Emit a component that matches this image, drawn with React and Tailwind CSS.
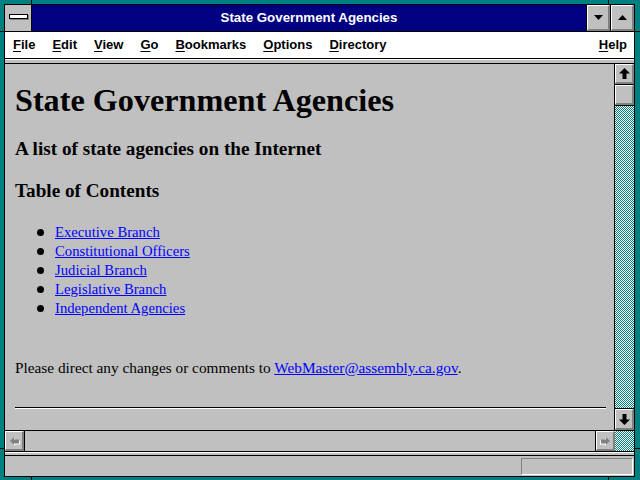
const links = [
  "Executive Branch",
  "Constitutional Officers",
  "Judicial Branch",
  "Legislative Branch",
  "Independent Agencies",
];

const menus = ["File", "Edit", "View", "Go", "Bookmarks", "Options", "Directory"];

const dither =
  "bg-[image:repeating-conic-gradient(#008080_0%_25%,#ffffff_0%_50%)] bg-[length:2px_2px]";

// raised win31 button look
const bevel =
  "bg-[#c0c0c0] border-t border-l border-t-white border-l-white border-r-2 border-b-2 border-r-[#808080] border-b-[#808080]";

const MenuLabel = ({ text }) => (
  <span>
    <span className="underline underline-offset-2">{text[0]}</span>
    {text.slice(1)}
  </span>
);

const VArrow = ({ down }) => (
  <svg width="11" height="11" viewBox="0 0 11 11" className={down ? "rotate-180" : ""}>
    <polygon points="5.5,0 11,5.5 7.5,5.5 7.5,11 3.5,11 3.5,5.5 0,5.5" fill="#000" />
  </svg>
);

const HArrow = ({ right }) => (
  <svg width="11" height="10" viewBox="0 0 11 10" className={right ? "-scale-x-100" : ""}>
    <polygon points="1,5 5,1 5,3.5 10,3.5 10,7.5 5,7.5 5,9" fill="#fff" transform="translate(1,1)" />
    <polygon points="1,5 5,1 5,3.5 10,3.5 10,7.5 5,7.5 5,9" fill="#808080" />
  </svg>
);

const Tri = ({ up }) => (
  <svg width="9" height="5" viewBox="0 0 9 5">
    <polygon points={up ? "4.5,0 9,5 0,5" : "0,0 9,0 4.5,5"} fill="#000" />
  </svg>
);

const App = () => {
  return (
    <div className="relative w-[640px] h-[480px] bg-[#008080] pt-[4px] pl-[4px] pr-[5px] pb-[3px]">
      {/* frame corner ticks */}
      <div className="absolute left-[31px] top-0 w-px h-[4px] bg-black" />
      <div className="absolute left-[608px] top-0 w-px h-[4px] bg-black" />
      <div className="absolute left-[31px] bottom-0 w-px h-[3px] bg-black" />
      <div className="absolute left-[608px] bottom-0 w-px h-[3px] bg-black" />
      <div className="absolute left-0 top-[31px] w-[4px] h-px bg-black" />
      <div className="absolute left-0 top-[448px] w-[4px] h-px bg-black" />
      <div className="absolute right-0 top-[31px] w-[5px] h-px bg-black" />
      <div className="absolute right-0 top-[448px] w-[5px] h-px bg-black" />

      <div className="w-full h-full border border-black flex flex-col bg-[#c0c0c0]">
        {/* title bar */}
        <div className="h-[27px] flex border-b border-black">
          <div className="w-[27px] border-r border-black bg-[#c0c0c0] flex items-center justify-center">
            <div className="w-[19px] h-[5px] -mt-[4px] border border-black bg-white shadow-[1px_1px_0_#808080]" />
          </div>
          <div className="flex-1 bg-[#000080] border-r border-black flex items-center justify-center text-white font-bold text-[13.3px] font-['Liberation_Sans',sans-serif]">
            State Government Agencies
          </div>
          <div className="w-[24px] border-r border-black">
            <div className={`${bevel} w-full h-full flex items-center justify-center`}>
              <Tri />
            </div>
          </div>
          <div className="w-[23px]">
            <div className={`${bevel} w-full h-full flex items-center justify-center`}>
              <Tri up />
            </div>
          </div>
        </div>

        {/* menu bar */}
        <div className="h-[27px] bg-white border-b border-black flex items-center pl-[8px] pr-[7px] gap-[17px] text-[13px] font-bold text-black font-['Liberation_Sans',sans-serif]">
          {menus.map((m) => (
            <MenuLabel key={m} text={m} />
          ))}
          <span className="ml-auto">
            <MenuLabel text="Help" />
          </span>
        </div>
        <div className="h-[5px] border-t border-white border-b border-b-black bg-[#c0c0c0]" />

        {/* page + vertical scroll */}
        <div className="h-[366px] flex">
          <div className="flex-1 min-w-0 overflow-hidden bg-[#c0c0c0] pl-[10px] pr-[8px] pt-[18px] text-black font-['Liberation_Serif',serif]">
            <h1 className="text-[32.2px] leading-[36px] font-bold whitespace-nowrap">State Government Agencies</h1>
            <h2 className="mt-[20px] text-[19.2px] leading-[22px] font-bold whitespace-nowrap">
              A list of state agencies on the Internet
            </h2>
            <h3 className="mt-[20px] text-[19.2px] leading-[22px] font-bold">Table of Contents</h3>
            <ul className="mt-[21px]">
              {links.map((l) => (
                <li key={l} className="h-[19px] flex items-center text-[14.7px] leading-[19px]">
                  <span className="ml-[22px] w-[7px] h-[7px] rounded-full bg-black" />
                  <a href="#" className="ml-[11px] text-[#0000ff] underline">
                    {l}
                  </a>
                </li>
              ))}
            </ul>
            <p className="mt-[40px] text-[15.3px] leading-[19px] whitespace-nowrap">
              Please direct any changes or comments to{" "}
              <a href="#" className="text-[#0000ff] underline">
                WebMaster@assembly.ca.gov
              </a>
              .
            </p>
            <div className="mt-[30px] h-[2px] border-t border-black border-b border-b-white" />
          </div>

          <div className="w-[20px] shrink-0 border-l border-black flex flex-col">
            <div className="h-[21px] border-b border-black">
              <div className={`${bevel} w-full h-full flex items-center justify-center`}>
                <VArrow />
              </div>
            </div>
            <div className="h-[21px] border-b border-black">
              <div className={`${bevel} w-full h-full`} />
            </div>
            <div className={`flex-1 ${dither}`} />
            <div className="h-[22px] border-t border-black">
              <div className={`${bevel} w-full h-full flex items-center justify-center`}>
                <VArrow down />
              </div>
            </div>
          </div>
        </div>

        {/* horizontal scroll */}
        <div className="h-[22px] border-t border-b border-black flex">
          <div className="w-[20px] border-r border-black">
            <div className={`${bevel} w-full h-full flex items-center justify-center`}>
              <HArrow />
            </div>
          </div>
          <div className="flex-1 bg-[#c0c0c0]" />
          <div className="w-[20px] border-l border-black">
            <div className={`${bevel} w-full h-full flex items-center justify-center`}>
              <HArrow right />
            </div>
          </div>
          <div className={`w-[19px] ${dither}`} />
        </div>
        <div className="h-[4px] border-t border-white border-b border-b-black bg-[#c0c0c0]" />

        {/* status bar */}
        <div className="flex-1 flex justify-end items-start pt-[2px] pr-px">
          <div className="w-[112px] h-[17px] border-t border-l border-[#808080] border-r border-b border-r-white border-b-white" />
        </div>
      </div>
    </div>
  );
};

export default App;
